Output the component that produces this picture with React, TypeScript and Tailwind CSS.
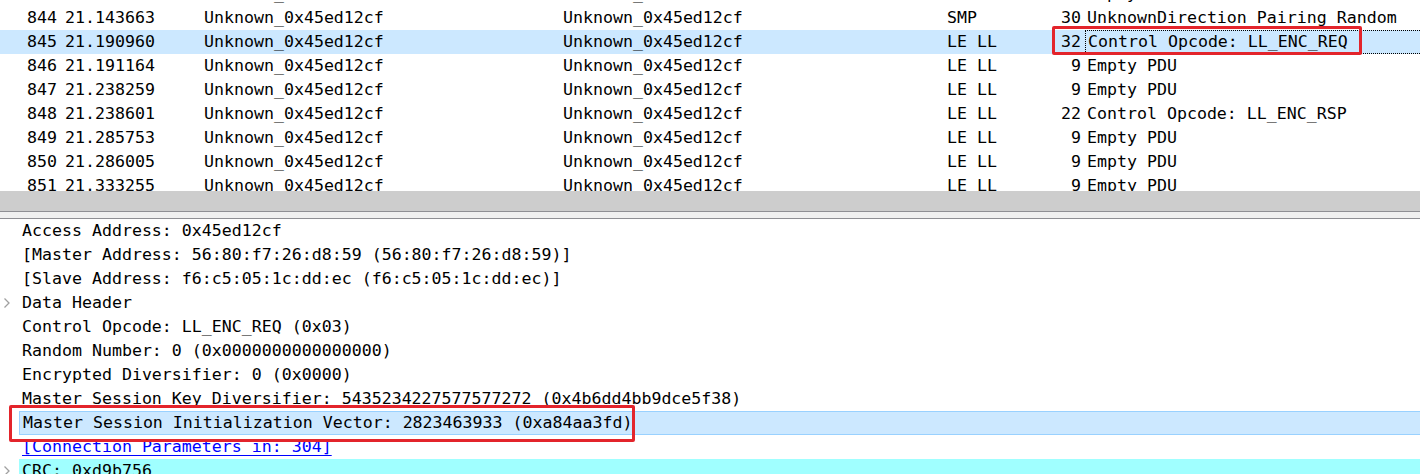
import React from "react";

type Packet = {
    no: number,
    time: string,
    src: string,
    dst: string,
    proto: string,
    len: number,
    info: string,
}

const packets: Packet[] = [
    { no: 843, time: "21.096361", src: "Unknown_0x45ed12cf", dst: "Unknown_0x45ed12cf", proto: "LE LL", len: 9, info: "Empty PDU" },
    { no: 844, time: "21.143663", src: "Unknown_0x45ed12cf", dst: "Unknown_0x45ed12cf", proto: "SMP", len: 30, info: "UnknownDirection Pairing Random" },
    { no: 845, time: "21.190960", src: "Unknown_0x45ed12cf", dst: "Unknown_0x45ed12cf", proto: "LE LL", len: 32, info: "Control Opcode: LL_ENC_REQ" },
    { no: 846, time: "21.191164", src: "Unknown_0x45ed12cf", dst: "Unknown_0x45ed12cf", proto: "LE LL", len: 9, info: "Empty PDU" },
    { no: 847, time: "21.238259", src: "Unknown_0x45ed12cf", dst: "Unknown_0x45ed12cf", proto: "LE LL", len: 9, info: "Empty PDU" },
    { no: 848, time: "21.238601", src: "Unknown_0x45ed12cf", dst: "Unknown_0x45ed12cf", proto: "LE LL", len: 22, info: "Control Opcode: LL_ENC_RSP" },
    { no: 849, time: "21.285753", src: "Unknown_0x45ed12cf", dst: "Unknown_0x45ed12cf", proto: "LE LL", len: 9, info: "Empty PDU" },
    { no: 850, time: "21.286005", src: "Unknown_0x45ed12cf", dst: "Unknown_0x45ed12cf", proto: "LE LL", len: 9, info: "Empty PDU" },
    { no: 851, time: "21.333255", src: "Unknown_0x45ed12cf", dst: "Unknown_0x45ed12cf", proto: "LE LL", len: 9, info: "Empty PDU" },
];

type Detail = {
    text: string,
    expander?: boolean,
    selected?: boolean,
    link?: boolean,
    cyan?: boolean,
}

const details: Detail[] = [
    { text: "Access Address: 0x45ed12cf" },
    { text: "[Master Address: 56:80:f7:26:d8:59 (56:80:f7:26:d8:59)]" },
    { text: "[Slave Address: f6:c5:05:1c:dd:ec (f6:c5:05:1c:dd:ec)]" },
    { text: "Data Header", expander: true },
    { text: "Control Opcode: LL_ENC_REQ (0x03)" },
    { text: "Random Number: 0 (0x0000000000000000)" },
    { text: "Encrypted Diversifier: 0 (0x0000)" },
    { text: "Master Session Key Diversifier: 5435234227577577272 (0x4b6dd4bb9dce5f38)" },
    { text: "Master Session Initialization Vector: 2823463933 (0xa84aa3fd)", selected: true },
    { text: "[Connection Parameters in: 304]", link: true },
    { text: "CRC: 0xd9b756", expander: true, cyan: true },
];

function Chevron() {
    return (
        <svg width="8" height="12" viewBox="0 0 8 12" className="absolute left-[3px] top-[6px]">
            <path d="M1.5 1.5 L6 6 L1.5 10.5" fill="none" stroke="#a0a0a0" strokeWidth="1.3" />
        </svg>
    );
}

function PacketRow({ p }: { p: Packet }) {
    const selected = p.no === 845;
    return (
        <div className={"flex flex-row h-[24px] items-center whitespace-pre " + (selected ? "bg-[#cce8ff]" : "")}>
            <div className="w-[57px] text-right">{p.no}</div>
            <div className="w-[147px] pl-[8px]">{p.time}</div>
            <div className="w-[359px]">{p.src}</div>
            <div className="w-[384px]">{p.dst}</div>
            <div className="w-[80px]">{p.proto}</div>
            <div className="w-[58px] text-right pr-[4px]">{p.len}</div>
            <div className={"flex-1 h-full flex items-center pl-[2px] " + (selected ? "border border-dotted border-black border-r-0" : "")}>
                {p.info}
            </div>
        </div>
    );
}

function DetailRow({ d }: { d: Detail }) {
    return (
        <div className="relative h-[24px] flex flex-row">
            {d.expander && <Chevron />}
            <div
                className={
                    "flex-1 ml-[19px] pl-[3px] flex items-center whitespace-pre " +
                    (d.selected ? "bg-[#cce8ff] border-y border-l border-[#99d1ff] " : "") +
                    (d.cyan ? "bg-[#a0ffff] " : "")
                }
            >
                {d.link ? (
                    <span className="text-[#0000ff] underline underline-offset-[3px]">{d.text}</span>
                ) : (
                    d.text
                )}
            </div>
        </div>
    );
}

export default function App() {
    return (
        <div
            className="relative w-[1420px] h-[474px] overflow-hidden bg-white text-black text-[16.6px] leading-none"
            style={{ fontFamily: '"DejaVu Sans Mono", "Liberation Mono", monospace' }}
        >
            {/* packet list */}
            <div className="h-[191px] overflow-hidden">
                <div className="-mt-[18px]">
                    {packets.map(p => <PacketRow key={p.no} p={p} />)}
                </div>
            </div>

            {/* scrollbar / splitter */}
            <div className="h-[20px] bg-[#cdcdcd]" />
            <div className="h-[1px] bg-[#8f8f94]" />
            <div className="h-[6px] bg-[#f0f0f0]" />
            <div className="h-[1px] bg-[#8f8f94]" />

            {/* packet details */}
            <div className="flex flex-col">
                {details.map((d, i) => <DetailRow key={i} d={d} />)}
            </div>

            {/* annotation boxes */}
            <div className="absolute left-[1052px] top-[26px] w-[310px] h-[29px] border-[3px] border-[#e3242b] rounded-[2px]" />
            <div className="absolute left-[9px] top-[405px] w-[626px] h-[37px] border-[3px] border-[#e3242b] rounded-[2px]" />
        </div>
    );
}
